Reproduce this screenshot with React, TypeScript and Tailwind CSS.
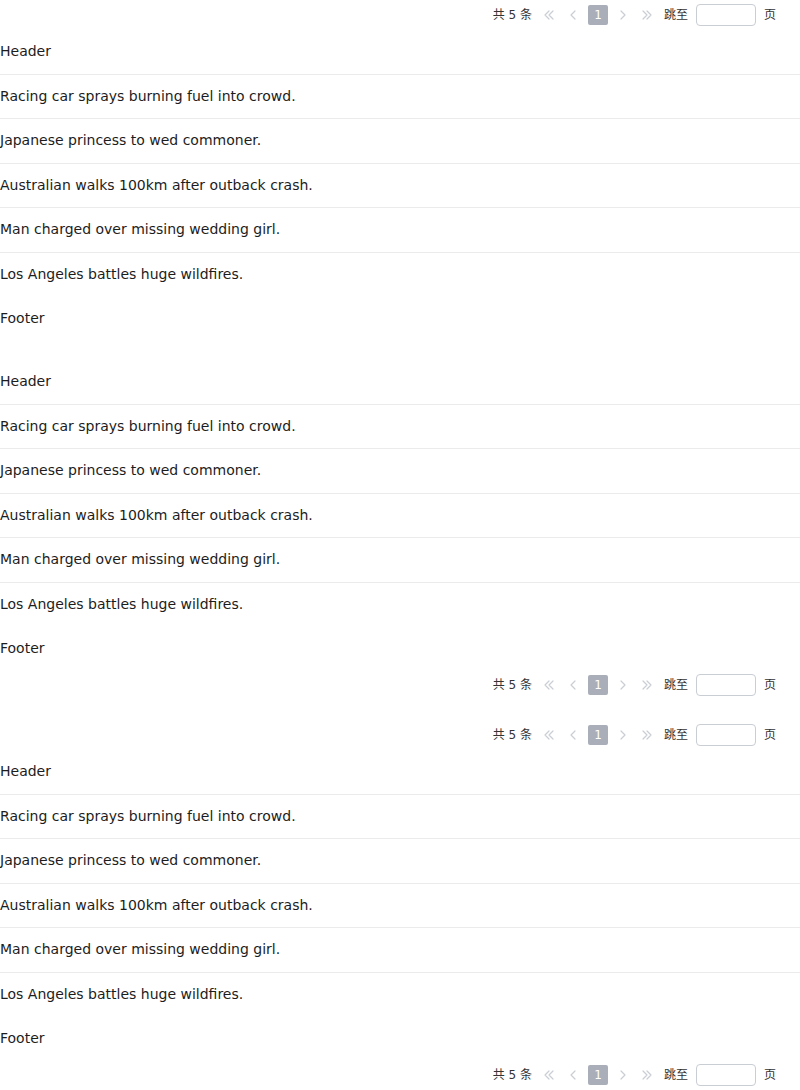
const data = [
  "Racing car sprays burning fuel into crowd.",
  "Japanese princess to wed commoner.",
  "Australian walks 100km after outback crash.",
  "Man charged over missing wedding girl.",
  "Los Angeles battles huge wildfires.",
]

const Chevron = ({ d }: { d: string }) => (
  <span className="w-5 h-5 flex items-center justify-center">
    <svg width="20" height="20" viewBox="0 0 20 20" fill="none" stroke="#c9cdd4" strokeWidth="1.2" strokeLinecap="round" strokeLinejoin="round">
      <path d={d} />
    </svg>
  </span>
)

function Pagination() {
  return (
    <div className="h-[30px] flex items-center justify-end gap-2 pr-6 text-xs text-[#333]">
      <span>共 5 条</span>
      <div className="flex items-center gap-1">
        <Chevron d="M9 6 L5 10 L9 14 M13 6 L9 10 L13 14" />
        <Chevron d="M11 6 L7 10 L11 14" />
        <span className="w-5 h-5 rounded-[2px] bg-[#a9aeb8] text-white flex items-center justify-center">1</span>
        <Chevron d="M9 6 L13 10 L9 14" />
        <Chevron d="M7 6 L11 10 L7 14 M11 6 L15 10 L11 14" />
      </div>
      <span>跳至</span>
      <input className="w-[60px] h-[22px] border border-[#c9cdd4] rounded-[4px] outline-none" />
      <span>页</span>
    </div>
  )
}

function NewsList({ top, bottom }: { top?: boolean; bottom?: boolean }) {
  return (
    <div>
      {top && <Pagination />}
      <div className="py-3 leading-[19.5px] border-b border-[#ebebeb]">Header</div>
      {data.map((item, i) => (
        <div
          key={i}
          className={i < data.length - 1 ? "py-3 leading-[19.5px] border-b border-[#ebebeb]" : "pt-[12.5px] pb-[11.5px] leading-[19.5px]"}
        >
          {item}
        </div>
      ))}
      <div className="pt-[12.5px] pb-3 leading-[19.5px]">Footer</div>
      {bottom && <Pagination />}
    </div>
  )
}

export default function App() {
  return (
    <div className="bg-white text-sm text-[#1d1d1d] flex flex-col gap-5" style={{ fontFamily: '"DejaVu Sans", "Noto Sans CJK SC", sans-serif' }}>
      <NewsList top />
      <NewsList bottom />
      <NewsList top bottom />
    </div>
  )
}
